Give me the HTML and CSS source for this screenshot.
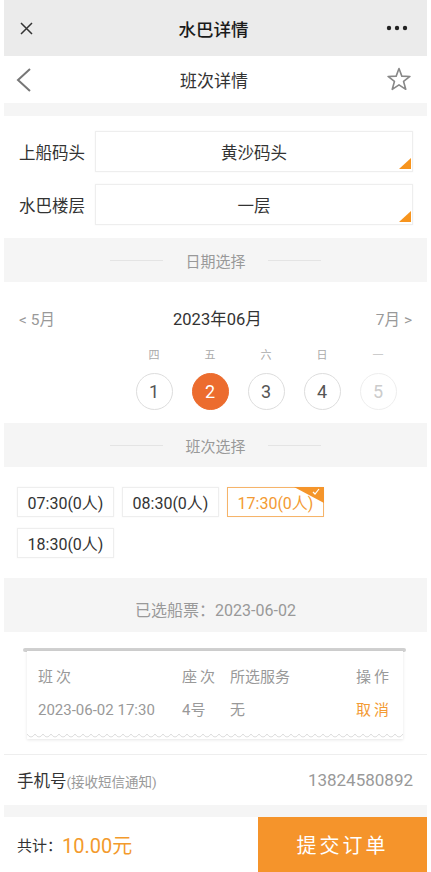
FILE: index.html
```html
<!DOCTYPE html>
<html lang="zh-CN">
<head>
  <meta charset="UTF-8">
  <meta name="viewport" content="width=device-width, initial-scale=1.0">
  <title>水巴详情</title>
  <link rel="stylesheet" href="styles.css">
</head>
<body>
  <div class="page">
    <header class="topbar">
      <svg class="icon-close" width="13" height="13" viewBox="0 0 13 13"><path d="M1 1L12 12M12 1L1 12" stroke="#333" stroke-width="1.5" fill="none"/></svg>
      <div class="topbar-title">水巴详情</div>
      <svg class="icon-more" width="22" height="6" viewBox="0 0 22 6"><circle cx="3" cy="3" r="2.2" fill="#222"/><circle cx="11" cy="3" r="2.2" fill="#222"/><circle cx="19" cy="3" r="2.2" fill="#222"/></svg>
    </header>

    <nav class="navbar">
      <svg class="icon-back" width="16" height="24" viewBox="0 0 16 24"><polyline points="14,1 2,12 14,23" stroke="#777" stroke-width="2" fill="none"/></svg>
      <div class="navbar-title">班次详情</div>
      <svg class="icon-star" width="26" height="25" viewBox="0 0 26 25"><polygon points="13,1.5 15.82,9.12 23.94,9.45 17.56,14.48 19.76,22.3 13,17.8 6.24,22.3 8.44,14.48 2.06,9.45 10.18,9.12" stroke="#888" stroke-width="1.6" stroke-linejoin="round" fill="none"/></svg>
    </nav>

    <div class="gap"></div>

    <section class="form">
      <div class="field">
        <label>上船码头</label>
        <div class="select">黄沙码头<i class="corner"></i></div>
      </div>
      <div class="field">
        <label>水巴楼层</label>
        <div class="select">一层<i class="corner"></i></div>
      </div>
    </section>

    <div class="band">
      <span class="band-line"></span>
      <span class="band-title">日期选择</span>
      <span class="band-line"></span>
    </div>

    <section class="calendar">
      <div class="month-row">
        <span class="month-nav">&lt; 5月</span>
        <span class="month-current">2023年06月</span>
        <span class="month-nav">7月 &gt;</span>
      </div>
      <div class="days">
        <div class="day">
          <span class="weekday">四</span>
          <span class="day-num">1</span>
        </div>
        <div class="day">
          <span class="weekday">五</span>
          <span class="day-num active">2</span>
        </div>
        <div class="day">
          <span class="weekday">六</span>
          <span class="day-num">3</span>
        </div>
        <div class="day">
          <span class="weekday">日</span>
          <span class="day-num">4</span>
        </div>
        <div class="day disabled">
          <span class="weekday">一</span>
          <span class="day-num">5</span>
        </div>
      </div>
    </section>

    <div class="band">
      <span class="band-line"></span>
      <span class="band-title">班次选择</span>
      <span class="band-line"></span>
    </div>

    <section class="slots">
      <div class="slot">07:30(0人)</div>
      <div class="slot">08:30(0人)</div>
      <div class="slot selected">17:30(0人)
        <svg class="slot-check" width="30" height="16" viewBox="0 0 30 16"><polygon points="0,0 30,0 30,16" fill="#f5952b"/><polyline points="19,5 21,7 25,2" stroke="#fff" stroke-width="1.2" fill="none"/></svg>
      </div>
      <div class="slot">18:30(0人)</div>
    </section>

    <div class="picked">已选船票：2023-06-02</div>

    <section class="ticket-wrap">
      <div class="ticket-rod"></div>
      <div class="ticket">
        <div class="ticket-row head">
          <span class="sp">班次</span>
          <span class="sp">座次</span>
          <span>所选服务</span>
          <span class="sp">操作</span>
        </div>
        <div class="ticket-row">
          <span>2023-06-02 17:30</span>
          <span>4号</span>
          <span>无</span>
          <span class="sp cancel">取消</span>
        </div>
        <svg class="ticket-wave" width="100%" height="6">
          <defs>
            <pattern id="wave" width="8" height="6" patternUnits="userSpaceOnUse">
              <path d="M0 1 Q4 7 8 1" fill="#fff" stroke="#ddd" stroke-width="1"/>
            </pattern>
          </defs>
          <rect width="100%" height="6" fill="url(#wave)"/>
        </svg>
      </div>
    </section>

    <div class="phone">
      <div class="phone-label">手机号<small>(接收短信通知)</small></div>
      <div class="phone-num">13824580892</div>
    </div>

    <div class="gap small"></div>

    <footer class="bottom">
      <div class="total">共计：<span class="price">10.00元</span></div>
      <button class="submit">提交订单</button>
    </footer>
  </div>
</body>
</html>
```

FILE: styles.css
```css
body {
  margin: 0;
  padding: 0;
  background-color: #fff;
  font-family: Roboto, "Noto Sans CJK SC", sans-serif;
  color: #333;
}

.page {
  margin: 0 4px;
}

/* top bar */
.topbar {
  height: 56px;
  background-color: #ebebeb;
  display: flex;
  align-items: center;
  justify-content: space-between;
  padding: 0 19px 0 16px;
}

.topbar-title {
  font-size: 17.5px;
  font-weight: 500;
  color: #1a1a1a;
  margin-left: 8px;
}

.navbar {
  height: 47px;
  display: flex;
  align-items: center;
  justify-content: space-between;
  padding: 0 15px 0 12px;
}

.navbar-title {
  font-size: 17px;
  color: #333;
  margin-left: 10px;
}

.gap {
  height: 13px;
  background-color: #f5f5f5;
}

.gap.small {
  height: 12px;
}

/* form */
.form {
  height: 122px;
  box-sizing: border-box;
  padding: 15px 14px 0 15px;
  display: flex;
  flex-direction: column;
  gap: 12px;
}

.field {
  display: flex;
  align-items: center;
  height: 41px;
}

.field label {
  width: 76px;
  font-size: 16.5px;
  color: #333;
}

.select {
  flex: 1;
  height: 41px;
  box-sizing: border-box;
  border: 1px solid #eee;
  box-shadow: 0 0 2px rgba(0, 0, 0, 0.04);
  display: flex;
  align-items: center;
  justify-content: center;
  font-size: 16.5px;
  color: #333;
  position: relative;
}

.corner {
  position: absolute;
  right: 1px;
  bottom: 2px;
  width: 0;
  height: 0;
  border-left: 12px solid transparent;
  border-bottom: 11px solid #f7941d;
}

/* section bands */
.band {
  height: 44px;
  background-color: #f5f5f5;
  display: flex;
  align-items: center;
  justify-content: center;
  gap: 22px;
}

.band + .slots {
  margin-top: -1px;
}

.band-line {
  width: 53px;
  height: 1px;
  background-color: #e4e4e4;
}

.band-title {
  font-size: 15px;
  color: #999;
}

/* calendar */
.calendar {
  height: 141px;
  box-sizing: border-box;
  padding-top: 24px;
}

.month-row {
  height: 24px;
  display: flex;
  align-items: center;
  justify-content: space-between;
  padding: 0 15px;
}

.month-nav {
  font-size: 15.5px;
  color: #999;
}

.month-current {
  font-size: 16.5px;
  color: #333;
  margin-left: 4px;
}

.days {
  display: flex;
  padding-left: 122px;
  margin-top: 18px;
}

.day {
  width: 56px;
  display: flex;
  flex-direction: column;
  align-items: center;
}

.weekday {
  height: 16px;
  line-height: 16px;
  font-size: 11px;
  color: #aaa;
}

.day-num {
  margin-top: 9px;
  width: 37px;
  height: 37px;
  box-sizing: border-box;
  border: 1px solid #ddd;
  border-radius: 50%;
  display: flex;
  align-items: center;
  justify-content: center;
  font-size: 18px;
  color: #555;
}

.day-num.active {
  background-color: #ec6c2e;
  border-color: #ec6c2e;
  color: #fff;
}

.day.disabled .weekday {
  color: #ccc;
}

.day.disabled .day-num {
  border-color: #eee;
  color: #ccc;
}

/* time slots */
.slots {
  height: 112px;
  box-sizing: border-box;
  padding: 21px 13px 0;
  display: flex;
  flex-wrap: wrap;
  align-content: flex-start;
  column-gap: 8px;
  row-gap: 11px;
}

.slot {
  width: 97px;
  height: 30px;
  box-sizing: border-box;
  border: 1px solid #eee;
  box-shadow: 0 0 2px rgba(0, 0, 0, 0.04);
  display: flex;
  align-items: center;
  justify-content: center;
  font-size: 16px;
  color: #333;
  position: relative;
}

.slot.selected {
  border-color: #f6b46a;
  color: #f39a33;
}

.slot-check {
  position: absolute;
  top: -1px;
  right: -1px;
}

.picked {
  height: 54px;
  box-sizing: border-box;
  padding-top: 22px;
  line-height: 22px;
  background-color: #f5f5f5;
  text-align: center;
  font-size: 16px;
  color: #999;
}

/* ticket */
.ticket-wrap {
  height: 123px;
  box-sizing: border-box;
  border-bottom: 1px solid #eee;
  padding: 16px 21px 0 19px;
}

.ticket-rod {
  height: 4px;
  border-radius: 2px;
  background-color: #d0d0d0;
}

.ticket {
  margin: -1px 3px 0 4px;
  padding: 16px 14px 0 11px;
  background-color: #fff;
  box-shadow: 0 1px 3px rgba(0, 0, 0, 0.1);
  position: relative;
}

.ticket-row {
  display: grid;
  grid-template-columns: 144px 48px 1fr auto;
  height: 20px;
  line-height: 20px;
  font-size: 15px;
  color: #999;
}

.ticket-row + .ticket-row {
  margin-top: 13px;
}

.sp {
  letter-spacing: 3px;
  margin-right: -3px;
}

.cancel {
  color: #f39a33;
}

.ticket-wave {
  display: block;
  margin: 13px -14px -5px -11px;
  width: calc(100% + 25px);
}

/* phone */
.phone {
  height: 50px;
  display: flex;
  align-items: center;
  justify-content: space-between;
  padding: 0 14px 0 13px;
}

.phone-label {
  font-size: 16.5px;
  color: #333;
}

.phone-label small {
  font-size: 13.5px;
  color: #999;
}

.phone-num {
  font-size: 17px;
  color: #999;
}

/* bottom bar */
.bottom {
  height: 55px;
  display: flex;
  align-items: stretch;
  justify-content: space-between;
}

.total {
  display: flex;
  align-items: center;
  padding-left: 13px;
  font-size: 15px;
  color: #333;
}

.price {
  font-size: 20px;
  color: #f39a2c;
}

.submit {
  width: 169px;
  border: none;
  padding: 0;
  background-color: #f5942b;
  color: #fff;
  font-family: inherit;
  font-size: 20px;
  letter-spacing: 3px;
  cursor: pointer;
}
```
